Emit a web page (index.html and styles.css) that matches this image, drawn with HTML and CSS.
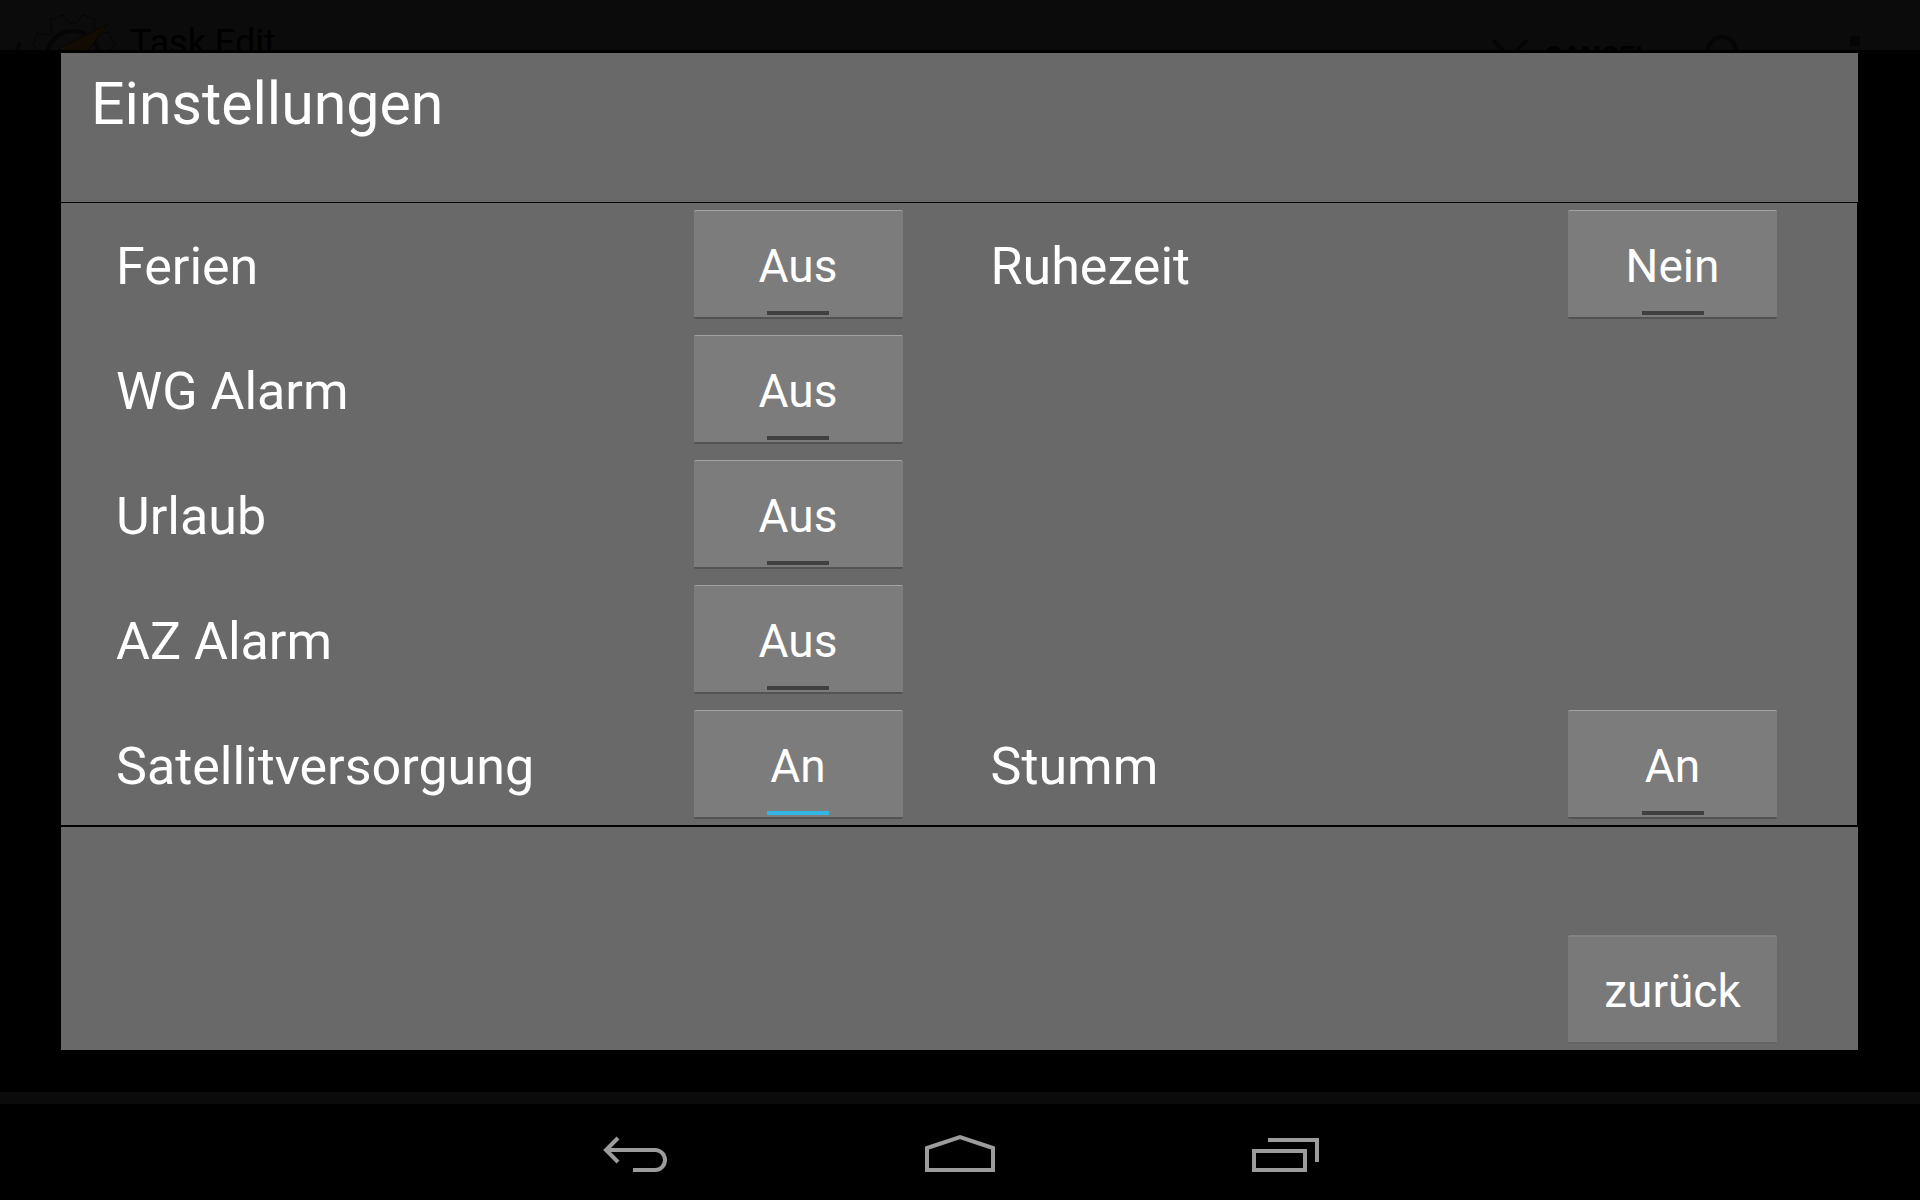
FILE: index.html
```html
<!DOCTYPE html>
<html lang="de">
<head>
    <meta charset="UTF-8">
    <meta name="viewport" content="width=device-width, initial-scale=1.0">
    <title>Einstellungen</title>
    <link rel="stylesheet" href="styles.css">
</head>
<body>
    <header class="actionbar">
        <svg class="back-mark" width="12" height="30" viewBox="0 0 12 30"><path d="M8 1 L2 15 L8 29"/></svg>
        <svg class="app-icon" width="92" height="92" viewBox="0 0 92 92">
            <path class="gear" d="M1 32 L5 19 L17 21 L20 18 L18 6 L31 1 L37 9 H45 L51 1 L63 6 L62 18 L66 21 L77 18 L83 32 L73 40 V46 L83 54 L77 68 L64 66 L61 69 L63 81 L51 86 L45 78 H37 L31 86 L18 81 L20 69 L17 66 L5 68 L1 54 L11 46 V40 Z"/>
            <circle class="ring" cx="41" cy="43" r="26"/>
            <path class="bolt" d="M76 10 L50 44 L10 60 L28 34 Z"/>
        </svg>
        <span class="actionbar-title">Task Edit</span>
        <button class="cancel">
            <svg width="36" height="36" viewBox="0 0 36 36"><path d="M1 1 L35 35 M35 1 L1 35"/></svg>
            CANCEL
        </button>
        <button class="search" aria-label="Search">
            <svg width="46" height="46" viewBox="0 0 46 46"><circle cx="16" cy="16" r="14"/><path d="M26 26 L43 43"/></svg>
        </button>
        <button class="more" aria-label="More">
            <svg width="10" height="40" viewBox="0 0 10 40"><path d="M0 0h10v10H0z M0 15h10v10H0z M0 30h10v10H0z"/></svg>
        </button>
    </header>

    <main class="stage">
        <section class="dialog">
            <h1 class="dialog-title">Einstellungen</h1>

            <div class="settings">
                <div class="setting">
                    <label for="ferien">Ferien</label>
                    <button class="btn toggle" id="ferien" aria-pressed="false">Aus</button>
                </div>
                <div class="setting">
                    <label for="ruhezeit">Ruhezeit</label>
                    <button class="btn toggle" id="ruhezeit" aria-pressed="false">Nein</button>
                </div>
                <div class="setting left">
                    <label for="wg-alarm">WG Alarm</label>
                    <button class="btn toggle" id="wg-alarm" aria-pressed="false">Aus</button>
                </div>
                <div class="setting left">
                    <label for="urlaub">Urlaub</label>
                    <button class="btn toggle" id="urlaub" aria-pressed="false">Aus</button>
                </div>
                <div class="setting left">
                    <label for="az-alarm">AZ Alarm</label>
                    <button class="btn toggle" id="az-alarm" aria-pressed="false">Aus</button>
                </div>
                <div class="setting left">
                    <label for="satellit">Satellitversorgung</label>
                    <button class="btn toggle" id="satellit" aria-pressed="true">An</button>
                </div>
                <div class="setting">
                    <label for="stumm">Stumm</label>
                    <button class="btn toggle" id="stumm" aria-pressed="false">An</button>
                </div>
            </div>

            <div class="dialog-footer">
                <button class="btn back">zurück</button>
            </div>
        </section>
    </main>

    <nav class="navbar">
        <button aria-label="Zurück">
            <svg width="72" height="48" viewBox="0 0 72 48"><path d="M8 16 H57 a10 10 0 0 1 0 20 H35"/><path d="M20 4 L8 16 L20 28"/></svg>
        </button>
        <button aria-label="Startseite">
            <svg width="72" height="48" viewBox="0 0 72 48"><path d="M3 36 V14 L36 3 L69 14 V36 Z"/></svg>
        </button>
        <button aria-label="Letzte Apps">
            <svg width="72" height="48" viewBox="0 0 72 48"><path d="M4 17 H55 V36 H4 Z"/><path d="M18 6 H67 V28"/></svg>
        </button>
    </nav>
</body>
</html>
```
FILE: styles.css
```css
* {
    margin: 0;
    padding: 0;
    box-sizing: border-box;
}

body {
    font-family: Roboto, "Liberation Sans", sans-serif;
    background: #000;
    color: #fff;
    display: flex;
    flex-direction: column;
    min-height: 100vh;
}

button {
    border: none;
    background: none;
    font-family: inherit;
    color: inherit;
    cursor: pointer;
}

svg {
    display: block;
    fill: none;
    flex: none;
}

/* dimmed app bar behind the dialog */
.actionbar {
    display: flex;
    align-items: flex-start;
    height: 50px;
    padding: 14px 60px 0 12px;
    overflow: hidden;
    background: #0b0b0b;
    color: #000;
}

.actionbar svg {
    stroke: #050505;
    stroke-width: 4;
}

.actionbar .back-mark {
    margin: 28px 8px 0 0;
}

.actionbar .app-icon {
    stroke-width: 1;
}

.app-icon .ring {
    stroke-width: 4;
}

.app-icon .bolt {
    fill: #110b02;
    stroke: #080601;
}

.actionbar-title {
    flex: 1;
    padding: 8px 0 0 6px;
    font-size: 36px;
    line-height: 42px;
}

.cancel {
    display: flex;
    gap: 16px;
    padding-top: 25px;
    font-size: 28px;
    font-weight: bold;
    line-height: 36px;
}

.search {
    padding: 21px 0 0 56px;
}

.more {
    padding: 22px 0 0 98px;
}

.more svg {
    fill: #050505;
    stroke: none;
}

.stage {
    flex: 1;
    padding: 3px 62px 42px 61px;
}

.dialog {
    display: flex;
    flex-direction: column;
    height: 100%;
}

.dialog-title {
    height: 149px;
    padding: 16px 30px;
    background: #696969;
    font-size: 59px;
    font-weight: normal;
    line-height: 70px;
}

.settings {
    display: grid;
    grid-template-columns: 1fr 1fr;
    column-gap: 88px;
    row-gap: 16px;
    margin: 1px 1px 2px 0;
    padding: 7px 80px 6px 55px;
    background: #696969;
}

.setting {
    display: flex;
    align-items: center;
    justify-content: space-between;
    font-size: 52px;
    line-height: 60px;
}

.setting label {
    padding-top: 4px;
}

.setting.left {
    grid-column: 1;
}

.btn {
    width: 209px;
    height: 109px;
    border-radius: 2px;
    background: #7c7c7c;
    font-size: 46px;
    line-height: 54px;
}

.toggle {
    display: flex;
    flex-direction: column;
    align-items: center;
    padding-top: 28px;
    border-top: 1px solid #a3a3a3;
    border-bottom: 2px solid #535353;
}

/* state bar under the caption */
.toggle::after {
    content: "";
    width: 62px;
    height: 4px;
    margin-top: 18px;
    background: #404040;
}

.toggle[aria-pressed="true"]::after {
    background: #33b5e5;
}

.dialog-footer {
    flex: 1;
    display: flex;
    align-items: flex-end;
    justify-content: flex-end;
    min-height: 223px;
    padding: 0 81px 6px;
    background: #696969;
}

.back {
    padding-top: 3px;
    border-top: 2px solid #818181;
    border-bottom: 2px solid #646464;
    background: #797979;
}

.navbar {
    display: flex;
    align-items: flex-start;
    justify-content: center;
    gap: 254px;
    height: 108px;
    padding-top: 30px;
    border-top: 12px solid #0b0b0b;
}

.navbar svg {
    stroke: #9c9c9c;
    stroke-width: 4;
}
```
